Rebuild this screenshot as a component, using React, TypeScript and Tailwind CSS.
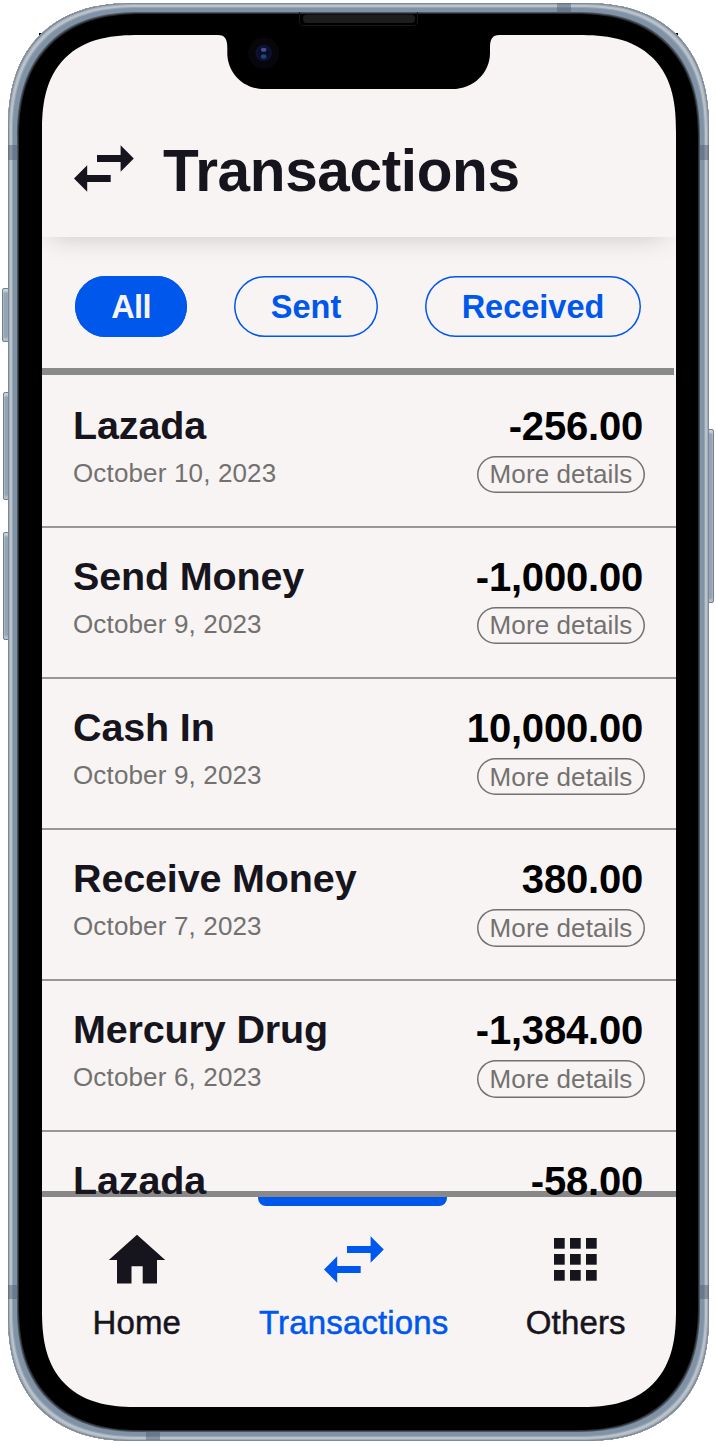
import { clsx } from "clsx";
import React from "react";

type Transaction = {
  name: string;
  amount: string;
  date?: string;
};

const transactions: Transaction[] = [
  { name: "Lazada", amount: "-256.00", date: "October 10, 2023" },
  { name: "Send Money", amount: "-1,000.00", date: "October 9, 2023" },
  { name: "Cash In", amount: "10,000.00", date: "October 9, 2023" },
  { name: "Receive Money", amount: "380.00", date: "October 7, 2023" },
  { name: "Mercury Drug", amount: "-1,384.00", date: "October 6, 2023" },
  { name: "Lazada", amount: "-58.00" },
];

const ArrowsIcon = ({ className }: { className?: string }) => (
  <svg
    className={className}
    width="60"
    height="47"
    viewBox="0 0 60 47"
    fill="currentColor">
    <path d="M23 10.1h23.6V.3l13.2 13.2-13.2 13.2V17H23z" />
    <path d="M36.7 30.1H13.2v-9.8L0 33.5l13.2 13.2V37h23.5z" />
  </svg>
);

const HomeIcon = () => (
  <svg width="58" height="50" viewBox="0 0 58 50" fill="currentColor">
    <path d="M29 .7 57.2 26H49v23.4H34.7V32.2H23.5v17.2H9V26H.8z" />
  </svg>
);

const GridIcon = () => (
  <svg width="43" height="43" viewBox="0 0 43 43" fill="currentColor">
    {[0, 16, 32].map((y) =>
      [0, 16, 32].map((x) => (
        <rect key={`${x}-${y}`} x={x} y={y} width="10.7" height="10.7" />
      ))
    )}
  </svg>
);

const Notch = () => (
  <svg
    className="absolute left-[218px] top-[10px] z-20"
    width="282"
    height="80"
    viewBox="218 10 282 80">
    <path d="M218 34.9c7 0 9.3 4 9.3 13v5c0 20 16 36.1 37 36.1h188c21 0 37.7-16 37.7-36.1v-5c0-9 2.3-13 9.3-13V34H218z" />
    <path
      d="M299.5 12v9q0 4.5 4.5 4.5h109q4.5 0 4.5-4.5v-9"
      fill="none"
      stroke="#171717"
    />
    <rect x="303" y="14.5" width="112" height="8.5" rx="4" fill="#1d1d1d" />
    <circle cx="263.7" cy="53" r="15.5" fill="#08060a" />
    <circle cx="263.7" cy="53" r="8.3" fill="#0c1233" />
    <circle cx="263.7" cy="53" r="5.5" fill="#080d26" />
    <ellipse cx="263.7" cy="49.7" rx="2.8" ry="2" fill="#4a4a91" />
    <ellipse cx="263.7" cy="56.5" rx="2.8" ry="2.3" fill="#1c4478" />
  </svg>
);

const Chip = ({
  active,
  className,
  children,
}: {
  active?: boolean;
  className?: string;
  children: React.ReactNode;
}) => (
  <button
    className={clsx(
      "flex h-[61.5px] items-center justify-center rounded-full pt-[3px] text-[32.5px] font-bold shadow-[inset_0_0_0_1.5px_#0057ec]",
      active
        ? "bg-[#0057ec] tracking-[-0.6px] text-[#f7f4f3]"
        : "text-[#0057ec]",
      className
    )}>
    {children}
  </button>
);

const TransactionRow = ({ name, amount, date }: Transaction) => (
  <li
    className={clsx(
      "flex h-[151.2px] shrink-0 justify-between pl-[31px] pr-[31px] pt-[28px]",
      date && "border-b-2 border-[#999795]"
    )}>
    <div>
      <h2 className="text-[39.5px] font-bold leading-[40px] tracking-[-0.15px] text-[#16141c]">
        {name}
      </h2>
      {date && (
        <p className="mt-[12px] text-[26px] leading-[32px] tracking-[0.15px] text-[#737170]">
          {date}
        </p>
      )}
    </div>
    <div className="flex flex-col items-end">
      <p className="mr-[1.5px] mt-[1px] text-[40px] font-bold leading-[40px] tracking-[-0.2px] text-black">
        {amount}
      </p>
      {date && (
        <button className="mt-[10px] flex h-[37.5px] w-[168px] items-center justify-center rounded-full pl-[1px] text-[26px] leading-[32px] tracking-[0.1px] text-[#737170] shadow-[inset_0_0_0_1.5px_#737170]">
          More details
        </button>
      )}
    </div>
  </li>
);

const NavItem = ({
  icon,
  label,
  className,
}: {
  icon: React.ReactNode;
  label: string;
  className?: string;
}) => (
  <a className={clsx("flex flex-col items-center", className)}>
    <span className="flex h-[50px] items-center">{icon}</span>
    <span className="mt-[20px] text-[33px] leading-[38px] tracking-[0.15px] [-webkit-text-stroke:0.5px_currentColor]">
      {label}
    </span>
  </a>
);

const sideButton =
  "absolute rounded-[2px] border border-[#75808d] bg-[#94a3b5] shadow-[inset_0_3px_2px_#c9d0d8,inset_0_-3px_2px_#b5bec9]";
const antenna = "absolute z-10 bg-[#4d5c6e]/45";

export default function App() {
  return (
    <div className="relative h-[1446px] w-[716px] overflow-hidden bg-white pl-[8px] pt-[3px] font-['Liberation_Sans',Arial,sans-serif]">
      {/* hardware buttons and the display panel edge */}
      <div className="absolute left-[39px] top-[33px] h-[1376px] w-[639px] bg-black" />
      <div className={clsx(sideButton, "left-[2px] top-[288px] h-[54px] w-[8px]")} />
      <div className={clsx(sideButton, "left-[3px] top-[392px] h-[108px] w-[8px]")} />
      <div className={clsx(sideButton, "left-[3px] top-[532px] h-[108px] w-[8px]")} />
      <div className={clsx(sideButton, "left-[706px] top-[429px] h-[174px] w-[8px]")} />

      <div className="relative h-[1438px] w-[701px] rounded-[106px] bg-black pl-[34px] pt-[32px] shadow-[inset_0_0_0_1px_#7d8996,inset_0_0_0_2px_#a3aeb9,inset_0_0_0_4px_#bac2ca,inset_0_0_0_5px_#95a3b2,inset_0_0_0_9px_#8092a6,inset_0_0_0_10px_#4b545f,inset_0_0_0_11px_#292b2e] supports-[corner-shape:round]:rounded-[127px] supports-[corner-shape:round]:[corner-shape:superellipse(1.25)]">
        <div className="flex h-[1372px] w-[633.5px] flex-col overflow-hidden rounded-[80px] bg-[#f7f4f3] supports-[corner-shape:round]:rounded-[97px] supports-[corner-shape:round]:[corner-shape:superellipse(1.35)]">
          <header className="flex h-[202px] shrink-0 items-center pl-[32px] pt-[66px] text-[#16141c] shadow-[-2px_8px_26px_-10px_rgba(0,0,0,0.22)]">
            <ArrowsIcon className="-mt-[2px]" />
            <h1 className="ml-[29px] mt-[3px] text-[58.5px] font-bold leading-[64px] tracking-[-0.35px]">
              Transactions
            </h1>
          </header>

          <div className="flex h-[131px] shrink-0 items-start pl-[33px] pt-[38.5px]">
            <Chip active className="w-[112px]">
              All
            </Chip>
            <Chip className="ml-[47px] w-[144px]">Sent</Chip>
            <Chip className="ml-[47px] w-[216px]">Received</Chip>
          </div>
          <div className="h-[7px] w-[632px] shrink-0 bg-[#8a8a89]" />

          {/* the last row runs over the nav's top border */}
          <ul className="relative z-10 flex h-[816px] shrink-0 flex-col pt-[1.5px]">
            {transactions.map((transaction, i) => (
              <TransactionRow key={i} {...transaction} />
            ))}
          </ul>

          <nav className="relative flex flex-1 border-t-[6px] border-[#888888] pt-[37px] text-[#16141c]">
            <div className="absolute left-[216px] top-0 h-[8.5px] w-[189px] rounded-b-[8px] bg-[#0057ec]" />
            <NavItem className="w-[190px]" icon={<HomeIcon />} label="Home" />
            <NavItem
              className="w-[245px] text-[#0057ec]"
              icon={<ArrowsIcon />}
              label="Transactions"
            />
            <NavItem className="w-[200px]" icon={<GridIcon />} label="Others" />
          </nav>
        </div>
      </div>

      <Notch />
      <div className={clsx(antenna, "left-[8px] top-[145px] h-[15px] w-[10px]")} />
      <div className={clsx(antenna, "left-[8px] top-[1285px] h-[14px] w-[10px]")} />
      <div className={clsx(antenna, "left-[699px] top-[145px] h-[15px] w-[10px]")} />
      <div className={clsx(antenna, "left-[699px] top-[1285px] h-[14px] w-[10px]")} />
      <div className={clsx(antenna, "left-[557px] top-[3px] h-[9px] w-[14px]")} />
      <div className={clsx(antenna, "left-[146px] top-[1431px] h-[9px] w-[14px]")} />
    </div>
  );
}
